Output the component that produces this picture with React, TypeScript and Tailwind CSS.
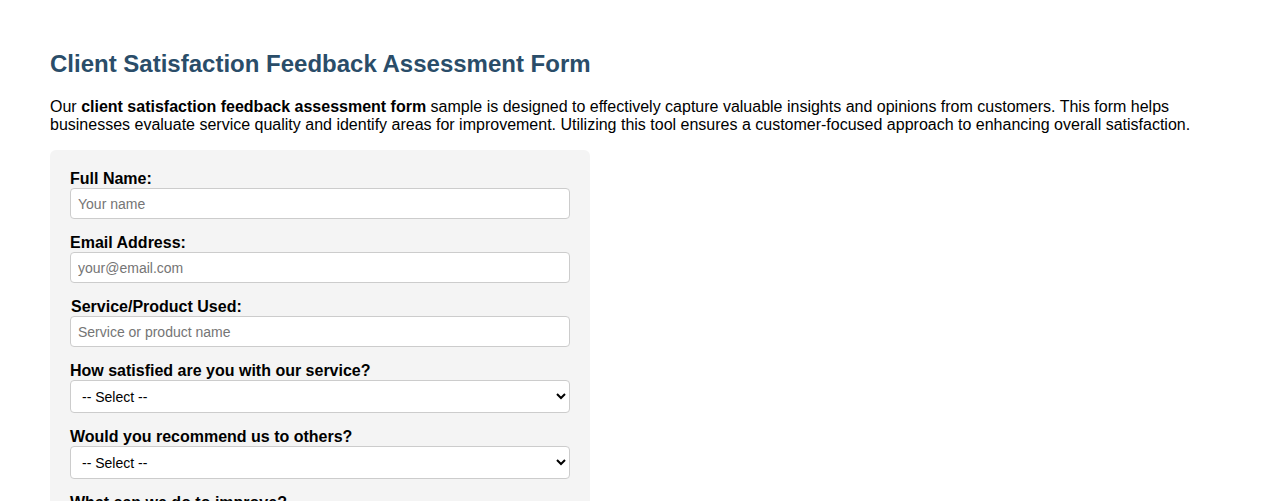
import { useState } from 'react';

const inputClass =
  'block w-full h-[31px] px-[7px] border border-[#cccccc] rounded-[4px] bg-white text-[14px] text-black placeholder:text-[#757575] outline-none';
const selectClass =
  'block w-full h-[33px] pl-[7px] pr-1 border border-[#cccccc] rounded-[4px] bg-white text-[14px] text-black outline-none';

const App = () => {
  const [form, setForm] = useState({ name: '', email: '', service: '', satisfaction: '', recommend: '', improve: '' });

  const update = (key: keyof typeof form) => (e: React.ChangeEvent<HTMLInputElement | HTMLSelectElement | HTMLTextAreaElement>) =>
    setForm({ ...form, [key]: e.target.value });

  return (
    <div className="min-h-screen bg-white pt-[30px] px-[50px] text-black font-['Liberation_Sans',Arial,sans-serif]">
      <h2 className="text-[24px] leading-[28px] font-bold text-[#2a4d69] my-[20px]">
        Client Satisfaction Feedback Assessment Form
      </h2>
      <p className="text-[16px] leading-[18px] mb-[16px]">
        Our <strong>client satisfaction feedback assessment form</strong> sample is designed to effectively capture valuable
        insights and opinions from customers. This form helps businesses evaluate service quality and identify areas for
        improvement. Utilizing this tool ensures a customer-focused approach to enhancing overall satisfaction.
      </p>

      {/* Form */}
      <form className="w-[540px] bg-[#f4f4f4] rounded-[6px] p-[20px]" onSubmit={(e) => e.preventDefault()}>
        <label className="block text-[16px] leading-[18px] font-bold">Full Name:</label>
        <input className={inputClass} placeholder="Your name" value={form.name} onChange={update('name')} />

        <label className="block mt-[15px] text-[16px] leading-[18px] font-bold">Email Address:</label>
        <input className={inputClass} type="email" placeholder="your@email.com" value={form.email} onChange={update('email')} />

        <label className="block mt-[15px] pl-px text-[16px] leading-[18px] font-bold">Service/Product Used:</label>
        <input className={inputClass} placeholder="Service or product name" value={form.service} onChange={update('service')} />

        <label className="block mt-[15px] text-[16px] leading-[18px] font-bold">How satisfied are you with our service?</label>
        <select className={selectClass} value={form.satisfaction} onChange={update('satisfaction')}>
          <option value="">-- Select --</option>
          <option>Very satisfied</option>
          <option>Satisfied</option>
          <option>Neutral</option>
          <option>Dissatisfied</option>
          <option>Very dissatisfied</option>
        </select>

        <label className="block mt-[15px] text-[16px] leading-[18px] font-bold">Would you recommend us to others?</label>
        <select className={selectClass} value={form.recommend} onChange={update('recommend')}>
          <option value="">-- Select --</option>
          <option>Yes</option>
          <option>Maybe</option>
          <option>No</option>
        </select>

        <label className="block mt-[15px] text-[16px] leading-[18px] font-bold">What can we do to improve?</label>
        <textarea
          className="block w-full h-[80px] p-2 border border-[#cccccc] rounded-[4px] bg-white text-[14px] outline-none"
          placeholder="Your suggestions"
          value={form.improve}
          onChange={update('improve')}
        />
      </form>
    </div>
  );
};

export default App;
